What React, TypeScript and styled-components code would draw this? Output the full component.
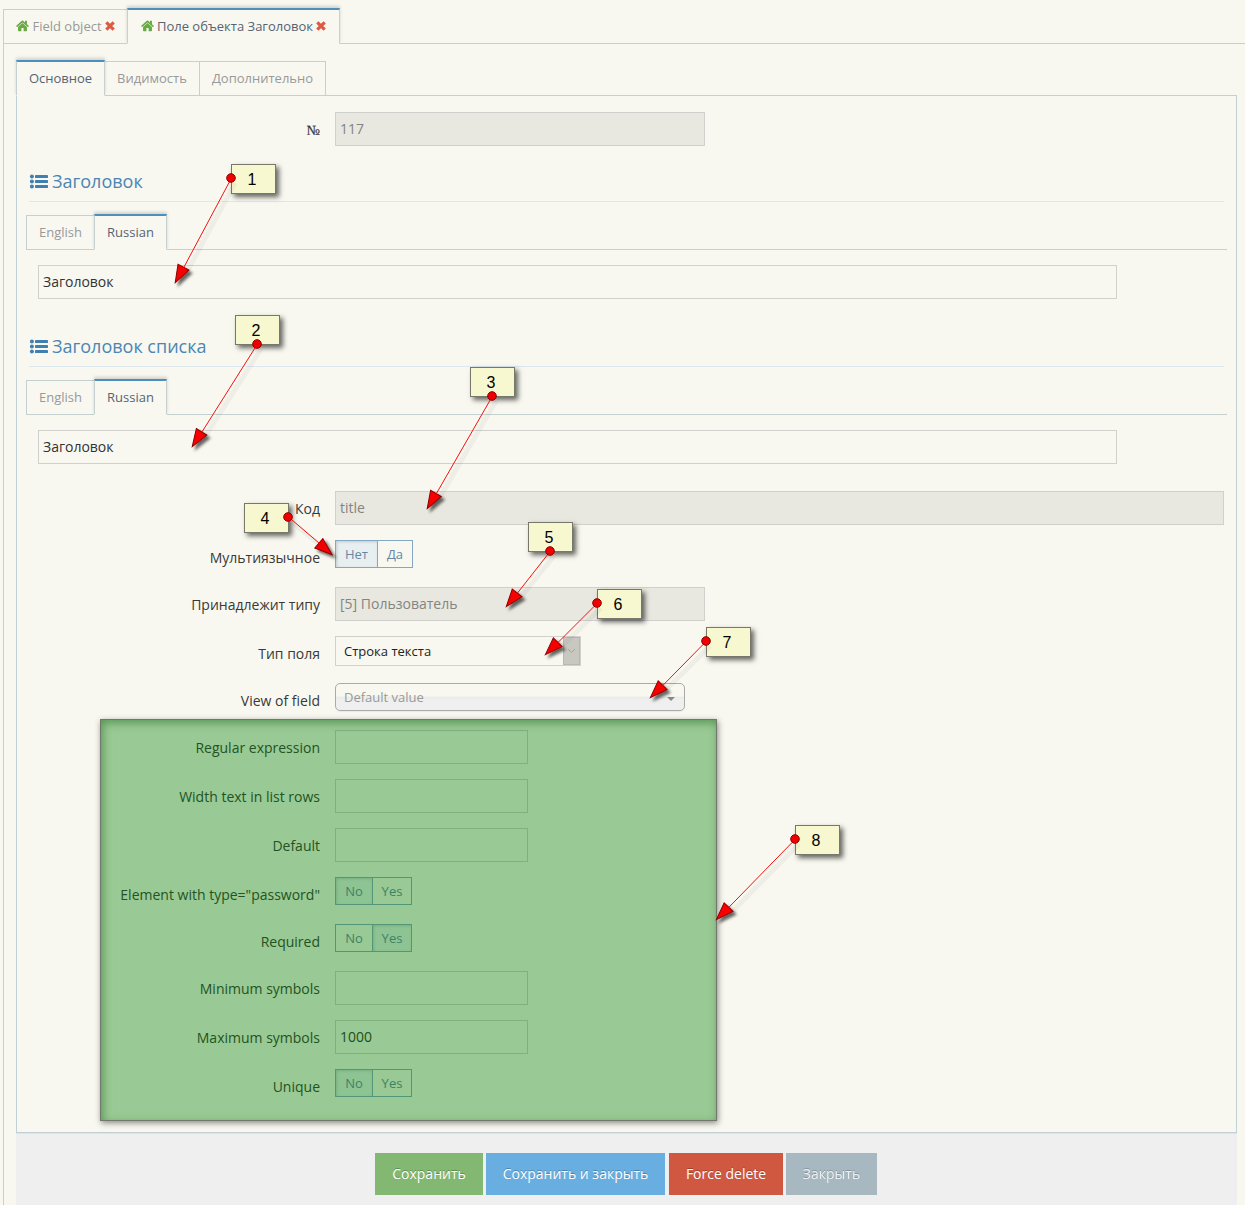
import React from "react";
import styled, { createGlobalStyle, css } from "styled-components";

const line = "#c5d0d0";
const paper = "#f8f8f0";

const Global = createGlobalStyle`
  *, *::before, *::after { box-sizing: border-box; }
  body {
    margin: 0;
    background: ${paper};
    color: #393939;
    font: 14px/20px "Open Sans", "Noto Sans", sans-serif;
  }
`;

const Page = styled.div`
  position: relative;
  width: 1245px;
  height: 1205px;
  padding: 8px 0 0 3px;
  overflow: hidden;
`;

const TabBar = styled.div`
  display: flex;
  align-items: flex-end;
  height: 36px;
  box-shadow: inset 0 -1px 0 ${line};
`;

const Tab = styled.div<{ $active?: boolean; $width: number }>`
  display: flex;
  align-items: center;
  justify-content: center;
  gap: 3px;
  flex: none;
  width: ${(p) => p.$width}px;
  height: 35px;
  margin-right: -1px;
  padding-bottom: 2px;
  border: 1px solid ${line};
  color: #999;
  font-size: 13px;
  line-height: 16px;
  white-space: nowrap;
  ${(p) =>
    p.$active &&
    css`
      position: relative;
      z-index: 1;
      height: 36px;
      border-top: 2px solid #4c8fbd;
      border-bottom-color: ${paper};
      background: ${paper};
      color: #576373;
      box-shadow: 0 -2px 3px 0 rgba(0, 0, 0, 0.15);
      clip-path: inset(-6px -4px 0 -4px);
    `}
`;

const Workspace = styled.div`
  height: 1162px;
  padding: 16px 8px 0 12px;
  border-left: 1px solid ${line};
`;

const Panel = styled.div`
  height: 1037px;
  padding: 16px 9px 0;
  border: 1px solid #c0d0d4;
  border-top: 0;
`;

const Row = styled.div<{ $height?: number }>`
  display: flex;
  height: ${(p) => p.$height ?? 34}px;
  margin-bottom: 15px;
`;

const Label = styled.label`
  width: 294px;
  margin-right: 15px;
  padding-top: 8px;
  text-align: right;
`;

const Numero = styled.span`
  font-family: "Liberation Serif", serif;
  font-size: 14px;
  -webkit-text-stroke: 0.2px;
`;

const Field = styled.div<{ $width: number; $disabled?: boolean }>`
  width: ${(p) => p.$width}px;
  height: 34px;
  padding: 6px 4px;
  border: 1px solid #d0d0cd;
  background: ${(p) => (p.$disabled ? "#e8e8e0" : "transparent")};
  color: ${(p) => (p.$disabled ? "#848480" : "#333")};
`;

const Section = styled.section`
  height: 165px;
`;

const Heading = styled.h3`
  display: flex;
  align-items: center;
  gap: 4px;
  height: 41px;
  margin: 0 3px 12px;
  border-bottom: 1px solid #dce8ee;
  color: #4a86b4;
  font-size: 18px;
  font-weight: 400;
  line-height: 24px;
`;

const SectionField = styled.div`
  padding: 15px 12px 0;
`;

const Toggle = styled.div`
  display: flex;
  height: 28px;
`;

const ToggleButton = styled.span<{ $on?: boolean; $width: number }>`
  width: ${(p) => p.$width}px;
  height: 28px;
  border: 1px solid #84a8c4;
  color: #6688a6;
  font-size: 13px;
  line-height: 26px;
  text-align: center;
  & + & {
    margin-left: -1px;
  }
  ${(p) =>
    p.$on &&
    css`
      background: rgba(214, 230, 240, 0.5);
      box-shadow: inset 1px 1px 3px rgba(0, 0, 0, 0.15);
    `}
`;

const TypeSelect = styled.div`
  display: flex;
  justify-content: space-between;
  width: 246px;
  height: 30px;
  padding-left: 8px;
  border: 1px solid #d0d0cd;
  font-size: 13px;
  line-height: 28px;
  color: #222;
`;

const SelectArrow = styled.span`
  display: flex;
  align-items: center;
  justify-content: center;
  width: 17px;
  height: 28px;
  border: 1px solid #b8b8b2;
  background: #c8c8c0;
`;

const ViewSelect = styled.div`
  display: flex;
  align-items: center;
  justify-content: space-between;
  width: 350px;
  height: 28px;
  padding: 0 9px 0 8px;
  border: 1px solid #aaa;
  border-radius: 5px;
  background: linear-gradient(${paper} 45%, #ebebe8 52%, #efefef 60%);
  box-shadow: 0 1px 1px rgba(0, 0, 0, 0.06);
  color: #999;
  font-size: 13px;
`;

const Caret = styled.i`
  margin-top: 3px;
  border: 4px solid transparent;
  border-top-color: #888;
  border-bottom: 0;
`;

const Footer = styled.footer`
  display: flex;
  justify-content: center;
  height: 73px;
  padding: 19px 2px 0 0;
  background: #efefef;
  border-top: 1px solid #e0e4e4;
`;

const Action = styled.button<{ $color: string; $width: number; $gap?: number }>`
  width: ${(p) => p.$width}px;
  height: 42px;
  margin: 0 ${(p) => p.$gap ?? 3}px 0 0;
  padding: 0 0 0 1px;
  border: 0;
  background: ${(p) => p.$color};
  color: #fff;
  font: 14px/20px "Open Sans", "Noto Sans", sans-serif;
  text-shadow: 0 -1px 0 rgba(0, 0, 0, 0.25);
`;

const Fade = styled.span`
  opacity: 0.8;
`;

const Highlight = styled.div`
  position: absolute;
  left: 100px;
  top: 719px;
  width: 617px;
  height: 402px;
  border: 1px solid #72776c;
  background: rgba(0, 124, 0, 0.385);
  box-shadow: inset 2px 3px 8px rgba(0, 80, 0, 0.42), 1px 2px 6px rgba(0, 0, 0, 0.45);
`;

const Note = styled.div<{ $x: number; $y: number }>`
  position: absolute;
  left: ${(p) => p.$x}px;
  top: ${(p) => p.$y}px;
  width: 45px;
  height: 30px;
  padding-right: 3px;
  border: 1px solid #77776c;
  background: #f7f7d0;
  box-shadow: 3px 3px 5px rgba(0, 0, 0, 0.6);
  color: #000;
  font: 16px/29px "Liberation Sans", Arial, sans-serif;
  text-align: center;
`;

const Arrows = styled.svg`
  position: absolute;
  inset: 0;
  pointer-events: none;
`;

const Home = () => (
  <svg width="13" height="12" viewBox="0 0 14 12" preserveAspectRatio="none" fill="#69aa46">
    <path d="M7 3 2.2 6.9v3.7q0 .6.6.6h3V8h2.4v3.2h3q.6 0 .6-.6V6.9z" />
    <path d="M13.7 5.8 11.8 4.2V.8H9.7v1.6L7.8.8Q7 .2 6.2.8L.3 5.8q-.2.2 0 .5l.6.7q.2.2.5 0L7 2.4 12.6 7q.3.2.5 0l.6-.7q.2-.3 0-.5z" />
  </svg>
);

const Close = () => (
  <svg width="10" height="10" viewBox="0 0 10 10" stroke="#dd5a43" strokeWidth="3.2">
    <path d="m1.3 1.3 7.4 7.4M8.7 1.3 1.3 8.7" />
  </svg>
);

const ListIcon = () => (
  <svg width="19" height="16" viewBox="0 0 19 16" fill="#4080b0">
    {[3.5, 8.5, 13.5].map((y) => (
      <g key={y}>
        <circle cx="2.9" cy={y} r="2" />
        <rect x="6" y={y - 1.5} width="13" height="3" rx=".4" />
      </g>
    ))}
  </svg>
);

const callouts = [
  { box: [231, 164], from: [231, 178], to: [175, 283] },
  { box: [235, 315], from: [257, 344], to: [192, 447] },
  { box: [470, 367], from: [492, 396], to: [427, 509] },
  { box: [244, 503], from: [288, 517], to: [332.5, 555] },
  { box: [528, 522], from: [550, 551], to: [506, 607] },
  { box: [597, 589], from: [597, 603], to: [545, 655] },
  { box: [706, 627], from: [706, 641], to: [650, 698] },
  { box: [795, 825], from: [795, 839], to: [716, 920] },
];

function Callouts() {
  return (
    <>
      {callouts.map(({ box }, i) => (
        <Note key={i} $x={box[0]} $y={box[1]}>
          {i + 1}
        </Note>
      ))}
      <Arrows width="1245" height="1205">
        <defs>
          <filter id="drop" x="-30%" y="-30%" width="170%" height="170%">
            <feDropShadow dx="3" dy="3" stdDeviation="1.8" floodOpacity="0.6" />
          </filter>
        </defs>
        {callouts.map(({ from, to }, i) => {
          const angle = (Math.atan2(to[1] - from[1], to[0] - from[0]) * 180) / Math.PI;
          const dx = from[0] - to[0];
          const dy = from[1] - to[1];
          const neck = 17.5 / Math.hypot(dx, dy);
          return (
            <g key={i}>
              <g filter="url(#drop)">
                <path
                  d="M-.5 0-18-6.2V6.2Z"
                  transform={`translate(${to[0]} ${to[1]}) rotate(${angle})`}
                  fill="#f80000"
                  stroke="#8b0000"
                  strokeWidth="1"
                />
              </g>
              <path
                d={`M${from[0] + 4} ${from[1] + 5}L${to[0] + dx * neck + 4} ${to[1] + dy * neck + 4}`}
                stroke="#000"
                strokeOpacity=".04"
                strokeWidth="5"
              />
              <path
                d={`M${from[0] + 0.5} ${from[1]}L${to[0] + dx * neck + 0.5} ${to[1] + dy * neck}`}
                stroke="#f81010"
                strokeWidth="1"
              />
              <circle cx={from[0]} cy={from[1]} r="4.3" fill="#f00000" stroke="#8b0000" />
            </g>
          );
        })}
      </Arrows>
    </>
  );
}

function TitleSection({ title }: { title: string }) {
  return (
    <Section>
      <Heading>
        <ListIcon />
        {title}
      </Heading>
      <TabBar>
        <Tab $width={69}>English</Tab>
        <Tab $active $width={73}>
          Russian
        </Tab>
      </TabBar>
      <SectionField>
        <Field $width={1079}>Заголовок</Field>
      </SectionField>
    </Section>
  );
}

function InputRow({ label, value, width = 193, disabled }: { label: React.ReactNode; value?: string; width?: number; disabled?: boolean }) {
  return (
    <Row>
      <Label>{label}</Label>
      <Field $width={width} $disabled={disabled}>
        {value}
      </Field>
    </Row>
  );
}

function ToggleRow({ label, options = ["No", "Yes"], on = 0, widths = [38, 40] }: { label: string; options?: string[]; on?: number; widths?: number[] }) {
  return (
    <Row $height={32}>
      <Label>{label}</Label>
      <Toggle>
        {options.map((option, i) => (
          <ToggleButton key={option} $on={i === on} $width={widths[i]}>
            {option}
          </ToggleButton>
        ))}
      </Toggle>
    </Row>
  );
}

export default function App() {
  return (
    <>
      <Global />
      <Page>
        <TabBar>
          <Tab $width={125}>
            <Home />
            Field object
            <Close />
          </Tab>
          <Tab $active $width={213}>
            <Home />
            Поле объекта Заголовок
            <Close />
          </Tab>
        </TabBar>
        <Workspace>
          <TabBar>
            <Tab $active $width={89}>
              Основное
            </Tab>
            <Tab $width={96}>Видимость</Tab>
            <Tab $width={127}>Дополнительно</Tab>
          </TabBar>
          <Panel>
            <InputRow label={<Numero>№</Numero>} value="117" width={370} disabled />
            <TitleSection title="Заголовок" />
            <TitleSection title="Заголовок списка" />
            <InputRow label="Код" value="title" width={889} disabled />
            <ToggleRow label="Мультиязычное" options={["Нет", "Да"]} widths={[43, 36]} />
            <InputRow label="Принадлежит типу" value="[5] Пользователь" width={370} disabled />
            <Row $height={32}>
              <Label>Тип поля</Label>
              <TypeSelect>
                Строка текста
                <SelectArrow>
                  <svg width="9" height="6" fill="none" stroke="#a3a39b">
                    <path d="m1 1 3.5 3.5L8 1" />
                  </svg>
                </SelectArrow>
              </TypeSelect>
            </Row>
            <Row $height={32}>
              <Label>View of field</Label>
              <ViewSelect>
                Default value
                <Caret />
              </ViewSelect>
            </Row>
            <InputRow label="Regular expression" />
            <InputRow label="Width text in list rows" />
            <InputRow label="Default" />
            <ToggleRow label={'Element with type="password"'} />
            <ToggleRow label="Required" on={1} />
            <InputRow label="Minimum symbols" />
            <InputRow label="Maximum symbols" value="1000" />
            <ToggleRow label="Unique" />
          </Panel>
          <Footer>
            <Action $color="#82b871" $width={108}>Сохранить</Action>
            <Action $color="#68aee0" $width={179} $gap={4}>Сохранить и закрыть</Action>
            <Action $color="#d05840" $width={114}>Force delete</Action>
            <Action $color="#a8b8c0" $width={91} $gap={0}>
              <Fade>Закрыть</Fade>
            </Action>
          </Footer>
        </Workspace>
        <Highlight />
        <Callouts />
      </Page>
    </>
  );
}
